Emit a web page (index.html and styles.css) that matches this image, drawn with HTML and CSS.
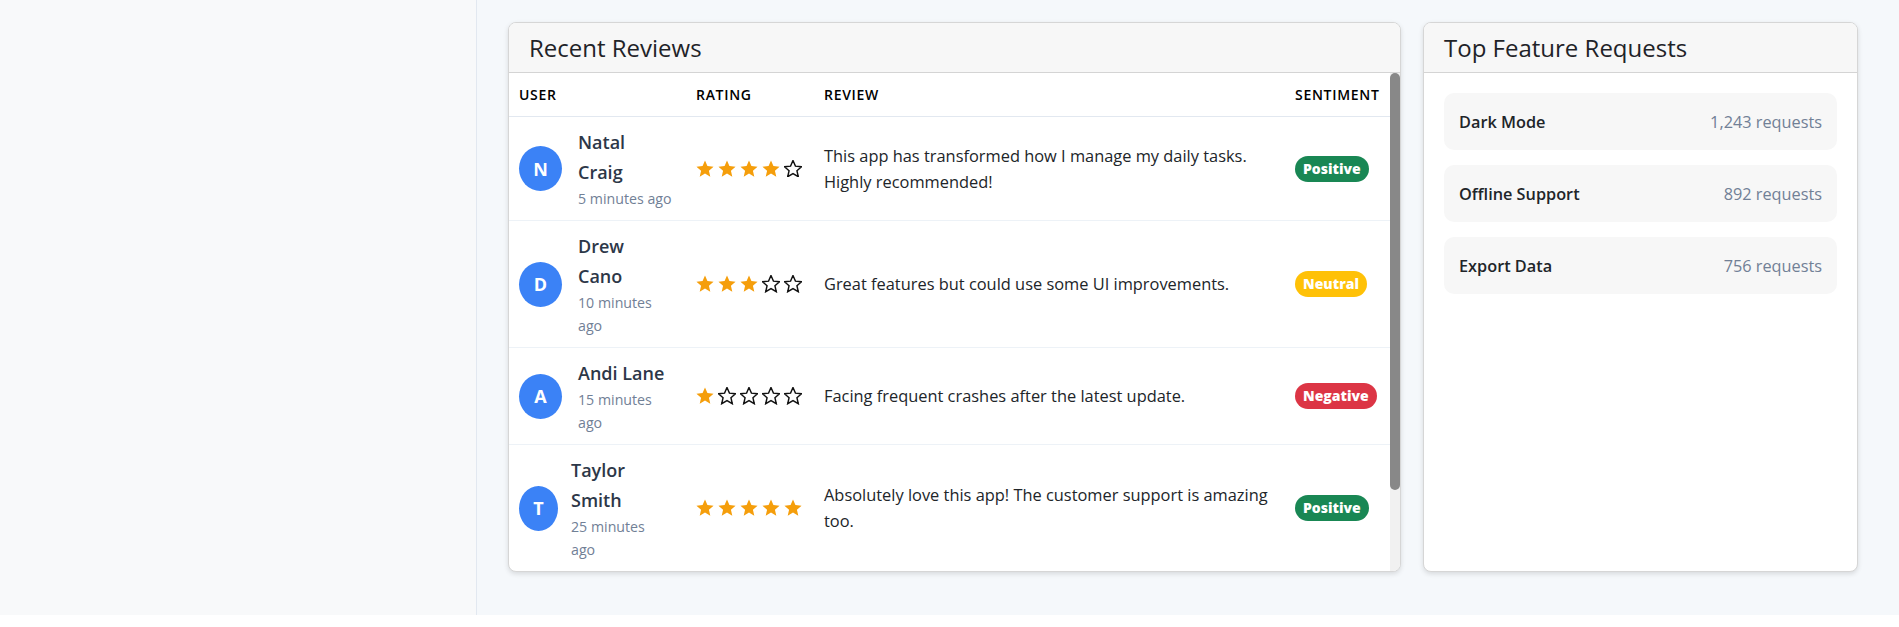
FILE: index.html
```html
<!DOCTYPE html>
<html lang="en">
<head>
<meta charset="utf-8">
<title>Reviews Dashboard</title>
<link rel="stylesheet" href="styles.css">
</head>
<body>
<div class="app">
  <aside class="sidebar"></aside>
  <main class="main">
    <div class="grid">
      <section class="card reviews-card">
        <header class="card-header"><h2 class="card-title">Recent Reviews</h2></header>
        <div class="table-area">
          <div class="table-scroll">
            <table class="reviews-table">
              <colgroup>
                <col class="col-user"><col class="col-rating"><col class="col-review"><col class="col-sentiment">
              </colgroup>
              <thead>
                <tr><th>User</th><th>Rating</th><th>Review</th><th>Sentiment</th></tr>
              </thead>
              <tbody>
                <tr>
                  <td><div class="user"><span class="avatar">N</span><div class="user-info"><div class="user-name">Natal Craig</div><div class="user-time">5 minutes ago</div></div></div></td>
                  <td><div class="stars">
                    <svg class="star on" viewBox="2 2 20 19"><path d="M12 2.5L14.7 8.78L21.51 9.41L16.38 13.92L17.88 20.59L12 17.1L6.12 20.59L7.63 13.92L2.49 9.41L9.3 8.78Z"/></svg>
                    <svg class="star on" viewBox="2 2 20 19"><path d="M12 2.5L14.7 8.78L21.51 9.41L16.38 13.92L17.88 20.59L12 17.1L6.12 20.59L7.63 13.92L2.49 9.41L9.3 8.78Z"/></svg>
                    <svg class="star on" viewBox="2 2 20 19"><path d="M12 2.5L14.7 8.78L21.51 9.41L16.38 13.92L17.88 20.59L12 17.1L6.12 20.59L7.63 13.92L2.49 9.41L9.3 8.78Z"/></svg>
                    <svg class="star on" viewBox="2 2 20 19"><path d="M12 2.5L14.7 8.78L21.51 9.41L16.38 13.92L17.88 20.59L12 17.1L6.12 20.59L7.63 13.92L2.49 9.41L9.3 8.78Z"/></svg>
                    <svg class="star off" viewBox="2 2 20 19"><path d="M12 2.5L14.7 8.78L21.51 9.41L16.38 13.92L17.88 20.59L12 17.1L6.12 20.59L7.63 13.92L2.49 9.41L9.3 8.78Z"/></svg>
                  </div></td>
                  <td class="review-text">This app has transformed how I manage my daily tasks. Highly recommended!</td>
                  <td><span class="badge positive">Positive</span></td>
                </tr>
                <tr>
                  <td><div class="user"><span class="avatar">D</span><div class="user-info"><div class="user-name">Drew Cano</div><div class="user-time">10 minutes ago</div></div></div></td>
                  <td><div class="stars">
                    <svg class="star on" viewBox="2 2 20 19"><path d="M12 2.5L14.7 8.78L21.51 9.41L16.38 13.92L17.88 20.59L12 17.1L6.12 20.59L7.63 13.92L2.49 9.41L9.3 8.78Z"/></svg>
                    <svg class="star on" viewBox="2 2 20 19"><path d="M12 2.5L14.7 8.78L21.51 9.41L16.38 13.92L17.88 20.59L12 17.1L6.12 20.59L7.63 13.92L2.49 9.41L9.3 8.78Z"/></svg>
                    <svg class="star on" viewBox="2 2 20 19"><path d="M12 2.5L14.7 8.78L21.51 9.41L16.38 13.92L17.88 20.59L12 17.1L6.12 20.59L7.63 13.92L2.49 9.41L9.3 8.78Z"/></svg>
                    <svg class="star off" viewBox="2 2 20 19"><path d="M12 2.5L14.7 8.78L21.51 9.41L16.38 13.92L17.88 20.59L12 17.1L6.12 20.59L7.63 13.92L2.49 9.41L9.3 8.78Z"/></svg>
                    <svg class="star off" viewBox="2 2 20 19"><path d="M12 2.5L14.7 8.78L21.51 9.41L16.38 13.92L17.88 20.59L12 17.1L6.12 20.59L7.63 13.92L2.49 9.41L9.3 8.78Z"/></svg>
                  </div></td>
                  <td class="review-text">Great features but could use some UI improvements.</td>
                  <td><span class="badge neutral">Neutral</span></td>
                </tr>
                <tr>
                  <td><div class="user"><span class="avatar">A</span><div class="user-info"><div class="user-name">Andi Lane</div><div class="user-time">15 minutes ago</div></div></div></td>
                  <td><div class="stars">
                    <svg class="star on" viewBox="2 2 20 19"><path d="M12 2.5L14.7 8.78L21.51 9.41L16.38 13.92L17.88 20.59L12 17.1L6.12 20.59L7.63 13.92L2.49 9.41L9.3 8.78Z"/></svg>
                    <svg class="star off" viewBox="2 2 20 19"><path d="M12 2.5L14.7 8.78L21.51 9.41L16.38 13.92L17.88 20.59L12 17.1L6.12 20.59L7.63 13.92L2.49 9.41L9.3 8.78Z"/></svg>
                    <svg class="star off" viewBox="2 2 20 19"><path d="M12 2.5L14.7 8.78L21.51 9.41L16.38 13.92L17.88 20.59L12 17.1L6.12 20.59L7.63 13.92L2.49 9.41L9.3 8.78Z"/></svg>
                    <svg class="star off" viewBox="2 2 20 19"><path d="M12 2.5L14.7 8.78L21.51 9.41L16.38 13.92L17.88 20.59L12 17.1L6.12 20.59L7.63 13.92L2.49 9.41L9.3 8.78Z"/></svg>
                    <svg class="star off" viewBox="2 2 20 19"><path d="M12 2.5L14.7 8.78L21.51 9.41L16.38 13.92L17.88 20.59L12 17.1L6.12 20.59L7.63 13.92L2.49 9.41L9.3 8.78Z"/></svg>
                  </div></td>
                  <td class="review-text">Facing frequent crashes after the latest update.</td>
                  <td><span class="badge negative">Negative</span></td>
                </tr>
                <tr>
                  <td><div class="user"><span class="avatar avatar-narrow">T</span><div class="user-info"><div class="user-name">Taylor Smith</div><div class="user-time">25 minutes ago</div></div></div></td>
                  <td><div class="stars">
                    <svg class="star on" viewBox="2 2 20 19"><path d="M12 2.5L14.7 8.78L21.51 9.41L16.38 13.92L17.88 20.59L12 17.1L6.12 20.59L7.63 13.92L2.49 9.41L9.3 8.78Z"/></svg>
                    <svg class="star on" viewBox="2 2 20 19"><path d="M12 2.5L14.7 8.78L21.51 9.41L16.38 13.92L17.88 20.59L12 17.1L6.12 20.59L7.63 13.92L2.49 9.41L9.3 8.78Z"/></svg>
                    <svg class="star on" viewBox="2 2 20 19"><path d="M12 2.5L14.7 8.78L21.51 9.41L16.38 13.92L17.88 20.59L12 17.1L6.12 20.59L7.63 13.92L2.49 9.41L9.3 8.78Z"/></svg>
                    <svg class="star on" viewBox="2 2 20 19"><path d="M12 2.5L14.7 8.78L21.51 9.41L16.38 13.92L17.88 20.59L12 17.1L6.12 20.59L7.63 13.92L2.49 9.41L9.3 8.78Z"/></svg>
                    <svg class="star on" viewBox="2 2 20 19"><path d="M12 2.5L14.7 8.78L21.51 9.41L16.38 13.92L17.88 20.59L12 17.1L6.12 20.59L7.63 13.92L2.49 9.41L9.3 8.78Z"/></svg>
                  </div></td>
                  <td class="review-text">Absolutely love this app! The customer support is amazing too.</td>
                  <td><span class="badge positive">Positive</span></td>
                </tr>
              </tbody>
            </table>
          </div>
          <div class="scrollbar"><div class="scrollbar-thumb"></div></div>
        </div>
      </section>

      <section class="card features-card">
        <header class="card-header"><h2 class="card-title">Top Feature Requests</h2></header>
        <div class="features-body">
          <div class="feature-item"><span class="feature-name">Dark Mode</span><span class="feature-count">1,243 requests</span></div>
          <div class="feature-item"><span class="feature-name">Offline Support</span><span class="feature-count">892 requests</span></div>
          <div class="feature-item"><span class="feature-name">Export Data</span><span class="feature-count">756 requests</span></div>
        </div>
      </section>
    </div>
  </main>
</div>
</body>
</html>
```

FILE: styles.css
```css
* { box-sizing: border-box; }

html, body {
  margin: 0;
  padding: 0;
  background: #ffffff;
  font-family: "Open Sans", "Noto Sans", sans-serif;
  color: #212529;
}

.app {
  display: flex;
  height: 615px;
}

.sidebar {
  width: 477px;
  flex: none;
  background: #f8f9fa;
  border-right: 1px solid #e2e8f0;
}

.main {
  flex: 1;
  background: #f5f8fb;
  padding: 22px 41px 0 31px;
}

.grid {
  display: grid;
  grid-template-columns: 893px 435px;
  gap: 22px;
  align-items: stretch;
}

.card {
  background: #ffffff;
  border: 1px solid #d6d6d6;
  border-radius: 8px;
  box-shadow: 0 2px 5px rgba(0, 0, 0, 0.12);
  overflow: hidden;
  display: flex;
  flex-direction: column;
}

.card-header {
  background: #f7f7f7;
  border-bottom: 1px solid #d4d4d4;
  padding: 10px 20px;
}

.card-title {
  margin: 0;
  font-size: 24px;
  font-weight: 500;
  line-height: 29px;
  color: #1f2328;
}

/* Reviews table */
.table-area {
  display: flex;
  height: 498px;
}

.table-scroll {
  flex: 1;
  min-width: 0;
  overflow: hidden;
}

.scrollbar {
  flex: none;
  width: 10px;
  background: #f1f1f1;
}

.scrollbar-thumb {
  height: 417px;
  background: #888888;
  border-radius: 5px;
}

.reviews-table {
  width: 100%;
  table-layout: fixed;
  border-collapse: collapse;
}

.col-user { width: 177px; }
.col-rating { width: 128px; }
.col-review { width: 471px; }
.col-sentiment { width: auto; }

.reviews-table th {
  text-align: left;
  font-size: 14px;
  font-weight: 600;
  text-transform: uppercase;
  letter-spacing: 0.7px;
  color: #000000;
  padding: 12px 10px;
  line-height: 19px;
  border-bottom: 1px solid #e2e8f0;
}

.reviews-table td {
  padding: 10px;
  vertical-align: middle;
  border-bottom: 1px solid #edf2f7;
}

.user {
  display: flex;
  align-items: center;
  gap: 16px;
}

.avatar {
  flex: none;
  width: 43px;
  height: 45px;
  border-radius: 50%;
  background: #3b82f6;
  color: #ffffff;
  font-weight: 700;
  font-size: 18px;
  display: flex;
  align-items: center;
  justify-content: center;
}

.avatar-narrow {
  width: 39px;
  margin-right: -3px;
}

.user-info { min-width: 0; }

.user-name {
  font-size: 18px;
  font-weight: 600;
  line-height: 30px;
  color: #2d3748;
  max-width: 92px;
}

.user-time {
  font-size: 14.2px;
  line-height: 23px;
  color: #718096;
  max-width: 96px;
}

.stars {
  display: flex;
  gap: 4px;
  align-items: center;
}

.star {
  width: 18px;
  height: 17.1px;
  display: block;
}

.star.on path { fill: #f59e0b; }
.star.off path { fill: none; stroke: #111111; stroke-width: 1.6; stroke-linejoin: miter; }

.review-text {
  font-size: 16.4px;
  line-height: 26px;
  color: #212529;
}

.badge {
  display: inline-block;
  padding: 3px 8px;
  border-radius: 13px;
  font-size: 14px;
  font-weight: 800;
  line-height: 20px;
  color: #ffffff;
}

.badge.positive { background: #198754; }
.badge.neutral { background: #ffc107; }
.badge.negative { background: #dc3545; }

/* Features */
.features-body {
  padding: 20px;
  display: flex;
  flex-direction: column;
  gap: 15px;
}

.feature-item {
  display: flex;
  justify-content: space-between;
  align-items: center;
  background: #f7f7f7;
  border-radius: 10px;
  padding: 0 15px;
  height: 57px;
  font-size: 16.3px;
}

.feature-name {
  font-weight: 600;
  color: #212529;
}

.feature-count {
  color: #718096;
}
```
